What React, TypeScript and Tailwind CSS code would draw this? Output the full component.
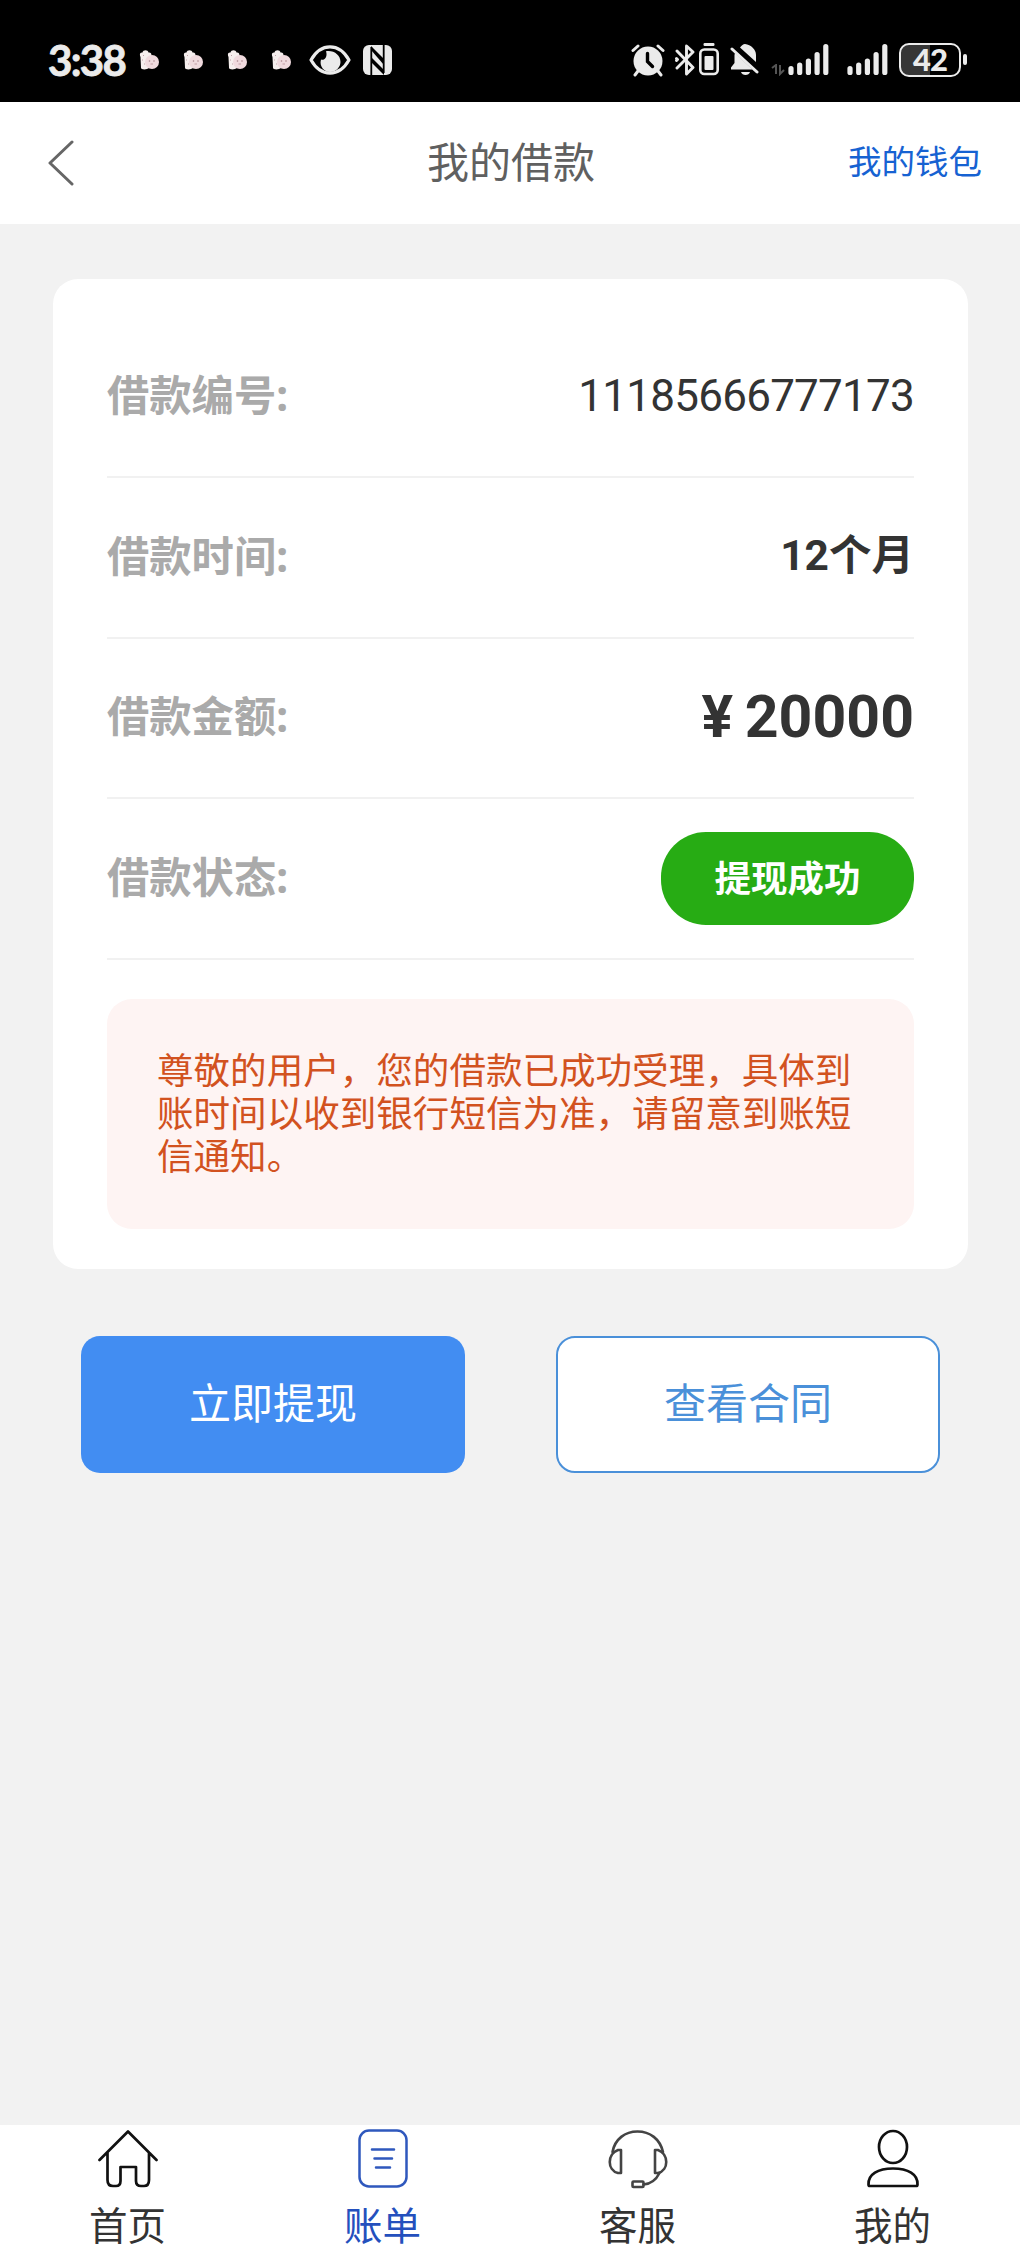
import React from "react";

const rows = [
  { label: "借款编号:", value: "11185666777173", style: "text-[44px] tracking-[-0.75px] pt-[2px]" },
  { label: "借款时间:", value: "12个月", style: "text-[42.5px] font-bold pt-[1px]" },
  { label: "借款金额:", value: "¥ 20000", style: "text-[59px] font-bold [word-spacing:-3px] pt-[3px]" },
];

function Blossom({ className }: { className: string }) {
  return (
    <svg className={className} width="20" height="20" viewBox="0 0 20 20">
      <path d="M1.500 7C0 4 1.500 2 3.500 2.500C4-.5 9-.5 9.500 2.500C12.500 2 13 5 12 7L10 18C8 20 1.500 20 2 17.500Z" fill="#f6efee" />
      <circle cx="13" cy="12" r="7" fill="#f0dade" />
      <circle cx="10.500" cy="11" r=".8" fill="#a8858c" />
      <circle cx="15" cy="11" r=".8" fill="#a8858c" />
      <path d="M11.500 14h2.500M4 5l1 1M3 10h1M5 14h1" stroke="#b58f98" strokeWidth=".8" />
    </svg>
  );
}

function Signal({ className }: { className: string }) {
  return (
    <svg className={className} width="41" height="33" viewBox="0 0 41 33" stroke="#ebebeb" strokeWidth="5.200" strokeLinecap="round">
      <path d="M3 25.500V29.500M11.700 22V29.500M20.400 18V29.500M29.100 11.500V29.500M37.800 3.500V29.500" />
    </svg>
  );
}

function StatusBar() {
  return (
    <div className="flex h-[102px] items-center justify-between bg-black pt-[17px] pr-[53px] pl-[48px] text-[#ebebeb]">
      <div className="flex items-center">
        <span className="w-[79px] font-['Lato'] text-[42px] leading-[44px] font-bold tracking-[-1.7px] [-webkit-text-stroke:0.8px_#ebebeb]">3:38</span>
        <Blossom className="ml-[12px]" />
        <Blossom className="ml-[24px]" />
        <Blossom className="ml-[24px]" />
        <Blossom className="ml-[24px]" />
        <svg className="ml-[18px]" width="42" height="30" viewBox="0 0 42 30">
          <path d="M2 15C12-2.500 30-2.500 40 15C30 32.500 12 32.500 2 15Z" fill="none" stroke="#ebebeb" strokeWidth="3.200" strokeLinejoin="round" />
          <path d="M17 6.200C19 12 15 16 12 14.500C10 21 15 27 21 27C27 27 31.500 22 31.500 17C31.500 10 25 5 17 6.200Z" fill="#ebebeb" />
        </svg>
        <svg className="ml-[12px]" width="29" height="30" viewBox="0 0 29 30">
          <rect width="29" height="30" rx="6" fill="#ebebeb" />
          <path d="M8.300 30V2M20.700 0V28" fill="none" stroke="#000" strokeWidth="1.800" />
          <path d="M8 1L21 14V20L8 5Z" fill="#000" />
          <path d="M8 12L21 25V30L8 17Z" fill="#000" />
        </svg>
      </div>
      <div className="flex items-center">
        <svg width="34" height="34" viewBox="0 0 34 34" fill="none" stroke="#ebebeb" strokeLinecap="round">
          <circle cx="17" cy="18" r="14.500" fill="#ebebeb" stroke="none" />
          <path d="M2 7.500L7 3M27 3L32 7.500M7 28L4 32M27 28L30 32" strokeWidth="3" />
          <path d="M16.500 10.500V18.500L21.500 23.500" stroke="#000" strokeWidth="3.400" />
        </svg>
        <svg className="ml-[10px]" width="21" height="34" viewBox="0 0 21 34" fill="none" stroke="#ebebeb" strokeWidth="2.900" strokeLinecap="round" strokeLinejoin="round">
          <path d="M2 8L18 24.500L11.500 31V3L18 9L2 25M1.500 15.500L2.500 16.500L1.500 17.500" />
        </svg>
        <svg className="ml-[3px]" width="20" height="33" viewBox="0 0 20 33">
          <rect x="4.500" width="11" height="3" rx="1.200" fill="#ebebeb" />
          <rect x="1.300" y="6.500" width="17.400" height="24.500" rx="4" fill="none" stroke="#ebebeb" strokeWidth="2.600" />
          <rect x="5.500" y="13" width="9" height="14" rx="1" fill="#ebebeb" />
        </svg>
        <svg className="ml-[11px]" width="30" height="34" viewBox="0 0 30 34" fill="#ebebeb">
          <path d="M10 4.500C12 2.500 13 1 15 1C21 2 26 6 26 12V19Z" />
          <path d="M5 10L22.500 26.500H1V24.500L4.500 20V12Z" />
          <path d="M11 29H20C19 33 12 33 11 29Z" />
          <path d="M2 6L27 29" stroke="#ebebeb" strokeWidth="3" strokeLinecap="round" />
        </svg>
        <svg className="mt-[21px] ml-[11px]" width="14" height="12" viewBox="0 0 14 12" fill="none" stroke="#555" strokeWidth="2">
          <path d="M1 4L5 1V10M9 1V10L13 6" />
        </svg>
        <Signal className="ml-[3px]" />
        <Signal className="ml-[18px]" />
        <div className="-mr-px ml-[11px] flex h-[34px] w-[62px] items-center justify-center rounded-[10px] border-[2.5px] border-[#ebebeb] bg-[linear-gradient(90deg,#363636_50%,#000_50%)] font-['Lato'] text-[31px] leading-none font-black tracking-[-1px]">
          42
        </div>
        <div className="ml-[3px] h-[11px] w-[4px] rounded-full bg-[#ebebeb]" />
      </div>
    </div>
  );
}

function HomeIcon() {
  return (
    <svg width="60" height="60" viewBox="0 0 60 60" fill="none" stroke="#111" strokeWidth="2.700" strokeLinecap="round" strokeLinejoin="round">
      <path d="M1.500 31L30 2.500L58.500 31M9.500 23.500V51Q9.500 57 15 57H18Q22.500 57 22.500 52V38H38V52Q38 57 43 57H46Q51 57 51 51V23.500" />
    </svg>
  );
}

function BillIcon() {
  return (
    <svg width="60" height="60" viewBox="0 0 60 60" fill="none" stroke="#2f58bd" strokeWidth="2.500" strokeLinecap="round">
      <rect x="6.500" y="1.500" width="47" height="56" rx="9.500" />
      <path d="M19 20.500H41M21.500 29.500H39M23 38.500H37" />
    </svg>
  );
}

function ServiceIcon() {
  return (
    <svg width="60" height="60" viewBox="0 0 60 60" fill="none" stroke="#444" strokeWidth="2.600" strokeLinecap="round" strokeLinejoin="round">
      <path d="M4.500 23C7 10 17 2.500 29.500 2.500S52 10 55 23" />
      <path d="M13 21H10C-1 25 -1 41 10 44H13ZM47 21H50C61 25 61 41 50 44H47Z" />
      <path d="M51.500 44C48 51 43 55 35.500 55.500" />
      <rect x="24.500" y="52.500" width="11" height="5.500" rx="1" />
    </svg>
  );
}

function PersonIcon() {
  return (
    <svg width="60" height="60" viewBox="0 0 60 60" fill="none" stroke="#111" strokeWidth="2.700" strokeLinejoin="round">
      <ellipse cx="30" cy="18" rx="14" ry="16" />
      <path d="M5.500 55.500C5 45 15 39.500 30 39.500S55 45 54.500 55.500Q54.500 57 53 57H7Q5.500 57 5.500 55.500Z" />
    </svg>
  );
}

const tabs = [
  { label: "首页", icon: <HomeIcon />, color: "text-[#333]" },
  { label: "账单", icon: <BillIcon />, color: "text-[#2450bd]" },
  { label: "客服", icon: <ServiceIcon />, color: "text-[#333]" },
  { label: "我的", icon: <PersonIcon />, color: "text-[#333]" },
];

export default function App() {
  return (
    <div className="flex h-[2250px] w-[1020px] flex-col overflow-hidden bg-[#f2f2f2] font-['Noto_Sans','Noto_Sans_CJK_SC',sans-serif]">
      <StatusBar />
      <header className="grid h-[122px] grid-cols-3 items-center bg-white pr-[38px] pl-[47px]">
        <svg width="27" height="46" viewBox="0 0 27 46" fill="none" stroke="#666" strokeWidth="3" strokeLinecap="round" strokeLinejoin="round">
          <path d="M25 2L3 23L25 44" />
        </svg>
        <h1 className="-ml-[7px] pb-[3px] text-center text-[42px] leading-[60px] whitespace-nowrap text-[#606060]">我的借款</h1>
        <a className="pb-[4px] text-right text-[33.5px] leading-[50px] text-[#1662d2]">我的钱包</a>
      </header>

      <main className="flex-1 pt-[55px]">
        <section className="mx-[53px] h-[990px] w-[915px] rounded-[25px] bg-white px-[54px] pt-[39px]">
          {rows.map((row) => (
            <div key={row.label} className="flex h-[160.4px] items-center justify-between border-b-[2.5px] border-[#f1f1f1] pb-[4px]">
              <span className="text-[42.3px] leading-[60px] font-bold text-[#aaa]">{row.label}</span>
              <span className={`font-['Roboto','Noto_Sans_CJK_SC',sans-serif] leading-[60px] text-[#333] ${row.style}`}>{row.value}</span>
            </div>
          ))}
          <div className="flex h-[160.4px] items-center justify-between border-b-[2.5px] border-[#f1f1f1]">
            <span className="pb-[3px] text-[42.3px] leading-[60px] font-bold text-[#aaa]">借款状态:</span>
            <span className="flex h-[93px] w-[253px] items-center justify-center rounded-[45px] bg-[#27ac14] text-[36.5px] font-bold text-white">
              提现成功
            </span>
          </div>
          <p className="mt-[39px] h-[230px] rounded-[25px] bg-[#fef4f3] px-[50px] pt-[50px] text-[36.55px] leading-[43.2px] text-[#d2521f]">
            尊敬的用户，您的借款已成功受理，具体到账时间以收到银行短信为准，请留意到账短信通知。
          </p>
        </section>
        <div className="mt-[67px] flex justify-between pr-[80px] pl-[81px] text-[42px]">
          <button className="h-[137px] w-[384px] rounded-[19px] bg-[#428df2] pb-[5px] text-white">立即提现</button>
          <button className="h-[137px] w-[384px] rounded-[19px] border-2 border-[#4a90d9] bg-white pb-[5px] text-[#4a90d9]">查看合同</button>
        </div>
      </main>

      <nav className="grid h-[125px] grid-cols-4 bg-white pt-[4px]">
        {tabs.map((tab) => (
          <div key={tab.label} className={`flex flex-col items-center ${tab.color}`}>
            {tab.icon}
            <span className="mt-[12px] text-[38.5px] leading-[48px]">{tab.label}</span>
          </div>
        ))}
      </nav>
    </div>
  );
}
